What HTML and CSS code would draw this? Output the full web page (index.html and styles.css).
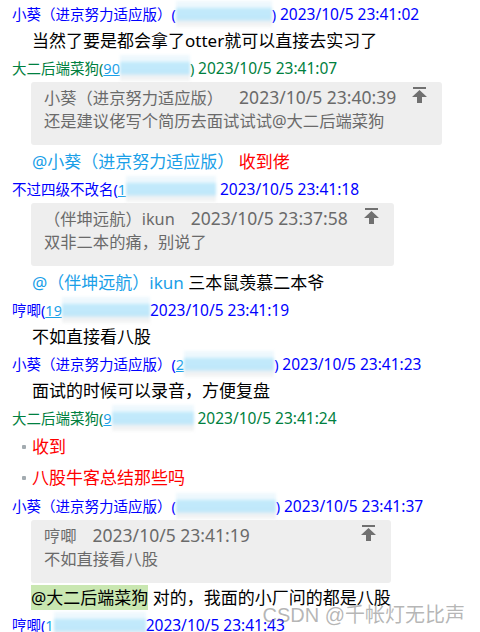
FILE: index.html
```html
<!DOCTYPE html>
<html>
<head>
	<meta charset="UTF-8">
	<title>聊天记录</title>
	<link rel="stylesheet" href="styles.css">
</head>
<body>
	<div class="chat">
		<div class="head blue">小葵（进京努力适应版）(<span class="mask w96"></span>) <span class="time">2023/10/5 23:41:02</span></div>
		<div class="text">当然了要是都会拿了otter就可以直接去实习了</div>

		<div class="head green">大二后端菜狗(<span class="qq">90</span><span class="mask w70"></span>) <span class="time">2023/10/5 23:41:07</span></div>
		<div class="reply">
			<div class="quote">
				<div class="quote-top">
					<span>小葵（进京努力适应版）<span class="quote-time">2023/10/5 23:40:39</span></span>
					<svg width="15" height="16" viewBox="0 0 15 16"><rect x="1" y="0" width="13" height="2"/><polygon points="7.5,3 0,10 5,10 5,16 10,16 10,10 15,10"/></svg>
				</div>
				<div>还是建议佬写个简历去面试试试@大二后端菜狗</div>
			</div>
			<div class="text"><span class="at">@小葵（进京努力适应版）</span> <span class="red">收到佬</span></div>
		</div>

		<div class="head blue">不过四级不改名(<span class="qq">1</span><span class="mask w90"></span> <span class="time">2023/10/5 23:41:18</span></div>
		<div class="reply">
			<div class="quote">
				<div class="quote-top">
					<span>（伴坤远航）ikun<span class="quote-time">2023/10/5 23:37:58</span></span>
					<svg width="15" height="16" viewBox="0 0 15 16"><rect x="1" y="0" width="13" height="2"/><polygon points="7.5,3 0,10 5,10 5,16 10,16 10,10 15,10"/></svg>
				</div>
				<div>双非二本的痛，别说了</div>
			</div>
			<div class="text"><span class="at">@（伴坤远航）ikun</span> 三本鼠羡慕二本爷</div>
		</div>

		<div class="head blue">哼唧(<span class="qq">19</span><span class="mask w88"></span><span class="time">2023/10/5 23:41:19</span></div>
		<div class="text">不如直接看八股</div>

		<div class="head blue">小葵（进京努力适应版）(<span class="qq">2</span><span class="mask w90"></span>) <span class="time">2023/10/5 23:41:23</span></div>
		<div class="text">面试的时候可以录音，方便复盘</div>

		<div class="head green">大二后端菜狗(<span class="qq">9</span><span class="mask w82"></span> <span class="time">2023/10/5 23:41:24</span></div>
		<ul class="list">
			<li>收到</li>
			<li>八股牛客总结那些吗</li>
		</ul>

		<div class="head blue">小葵（进京努力适应版）(<span class="mask w100"></span>) <span class="time">2023/10/5 23:41:37</span></div>
		<div class="reply">
			<div class="quote">
				<div class="quote-top">
					<span>哼唧<span class="quote-time">2023/10/5 23:41:19</span></span>
					<svg width="15" height="16" viewBox="0 0 15 16"><rect x="1" y="0" width="13" height="2"/><polygon points="7.5,3 0,10 5,10 5,16 10,16 10,10 15,10"/></svg>
				</div>
				<div>不如直接看八股</div>
			</div>
			<div class="text flush"><span class="hl">@大二后端菜狗</span> 对的，我面的小厂问的都是八股</div>
		</div>

		<div class="head blue">哼唧(<span class="qq">1</span><span class="mask w92"></span><span class="time">2023/10/5 23:41:43</span></div>

		<div class="watermark">CSDN @千帐灯无比声</div>
	</div>
</body>
</html>
```

FILE: styles.css
```css
html, body {
	margin: 0;
	overflow: hidden;
}
body {
	background-color: #fff;
	color: #000;
	font-family: "Noto Sans", "Noto Sans CJK SC", sans-serif;
}

.chat {
	position: relative;
	padding: 1px 12px 0;
}

/* 发送人 + 时间 */
.head {
	font-size: 14.5px;
	line-height: 26px;
	height: 26px;
	white-space: nowrap;
}
.time {
	font-size: 15.5px;
}
.blue {
	color: #0000ff;
}
.green {
	color: #008040;
}
.qq {
	color: #1aa0e8;
	text-decoration: underline;
}
.mask {
	display: inline-block;
	vertical-align: top;
	height: 26px;
	background: linear-gradient(to bottom, #eef8fd 0, #eef8fd 22%, #c2eafb 30%, #bfe7fa 70%, #eef1f3 80%, #f5f5f5 100%);
	filter: blur(1.5px);
}
.w70 { width: 70px; }
.w82 { width: 82px; }
.w88 { width: 88px; }
.w90 { width: 90px; }
.w92 { width: 92px; }
.w96 { width: 96px; }
.w100 { width: 100px; }

/* 消息正文 */
.text {
	font-size: 17px;
	line-height: 28px;
	padding-left: 20px;
}
.at {
	color: #1aa0e8;
}
.red {
	color: #ff0000;
}
.hl {
	background-color: #c9e7b1;
	padding: 1px 0;
}

/* 引用回复 */
.reply {
	display: flex;
	flex-direction: column;
	width: fit-content;
	margin-left: 19px;
}
.quote {
	margin-top: 1px;
	padding: 4px 15px 12px 13px;
	background-color: #eeeeee;
	border-radius: 3px;
	color: #6a6a6a;
	font-size: 16.3px;
	line-height: 23px;
}
.quote-top {
	display: flex;
	justify-content: space-between;
	align-items: flex-start;
	gap: 16px;
	white-space: nowrap;
}
.quote-top svg {
	flex: none;
	margin-top: 1px;
	fill: #707070;
}
.quote-time {
	margin-left: 16px;
	font-size: 17.5px;
}
.reply .text {
	margin-top: 2px;
	padding-left: 1px;
	line-height: 29px;
}
.reply .flush {
	margin-top: 1px;
	padding-left: 0;
	line-height: 28px;
}

/* 列表 */
.list {
	margin: 0;
	padding: 0 0 0 10px;
	list-style: none;
}
.list li {
	display: flex;
	align-items: center;
	gap: 6px;
	color: #ff0000;
	font-size: 17px;
	line-height: 31px;
}
.list li::before {
	content: "";
	width: 4px;
	height: 4px;
	border-radius: 1px;
	background-color: #a3abb0;
}

.watermark {
	position: absolute;
	right: 15px;
	top: 599px;
	font-family: "Liberation Sans", "Noto Sans CJK SC", sans-serif;
	font-size: 20px;
	color: rgba(110, 110, 110, 0.5);
}
```
